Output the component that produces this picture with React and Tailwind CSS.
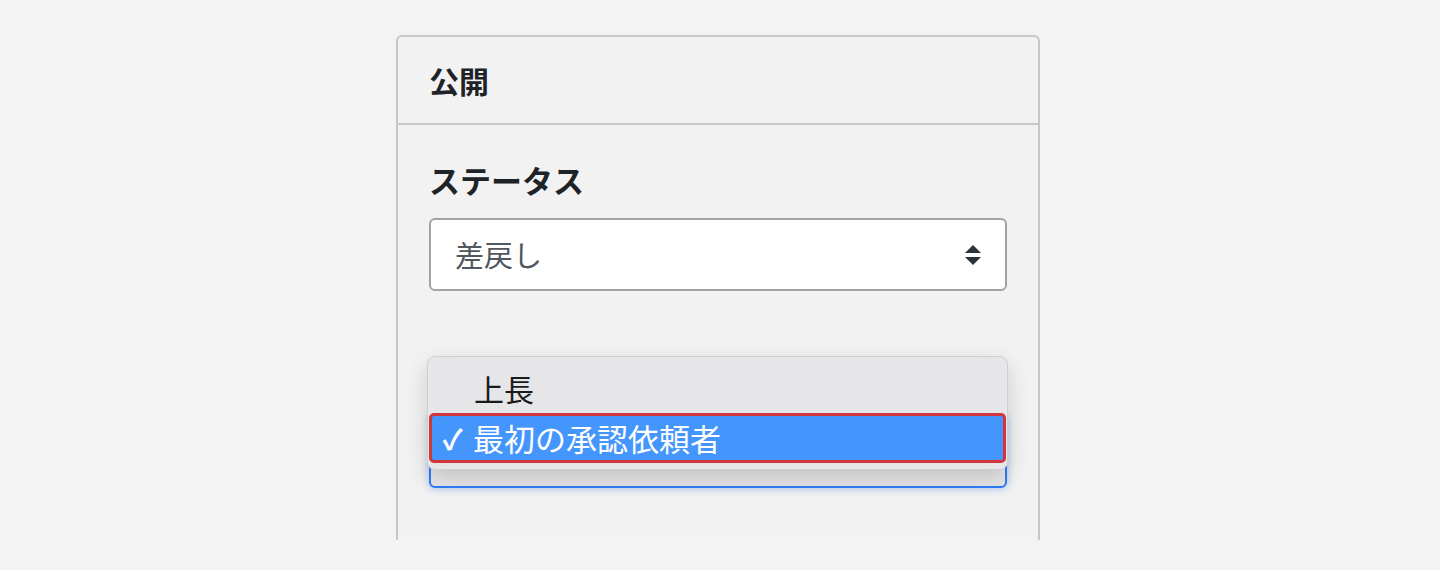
import React from 'react';

const font = { fontFamily: '"Noto Sans CJK JP", "Noto Sans", sans-serif' };

function UpDownArrows() {
  return (
    <svg width="20" height="22" viewBox="0 0 20 22" aria-hidden="true">
      <path d="M10 1 L18 9 L2 9 Z" fill="#2c3338" />
      <path d="M2 13 L18 13 L10 21 Z" fill="#2c3338" />
    </svg>
  );
}

export default function App() {
  return (
    <div className="w-[1440px] h-[570px] bg-[#f3f3f3] overflow-hidden" style={font}>
      <div className="ml-[396px] mt-[35px] w-[644px] h-[505px] bg-[#f2f2f2] border-2 border-b-0 border-[#c7c7c7] rounded-t-[6px]">
        {/* header */}
        <div className="h-[88px] border-b-2 border-[#c7c7c7] flex items-center pl-[31px]">
          <h2 className="text-[30px] font-bold text-[#1d2327] leading-none">公開</h2>
        </div>

        <div className="px-[31px] pt-[39px]">
          <div className="text-[31px] font-bold text-[#1d2327] leading-none">ステータス</div>

          {/* status select */}
          <div className="mt-[23px] h-[73px] w-[578px] bg-white border-2 border-[#a2a2a2] rounded-[6px] flex items-center justify-between pl-[24px] pr-[22px]">
            <span className="text-[29px] text-[#50575e]">差戻し</span>
            <UpDownArrows />
          </div>

          {/* focused select with open menu */}
          <div className="relative mt-[124px] h-[73px] w-[578px] bg-[#e7e7e7] border-2 border-[#2f7cf6] rounded-[6px] shadow-[0_0_6px_2px_rgba(47,124,246,0.25)]">
            <div className="absolute left-[-4px] right-[-3px] top-[-61px] h-[114px] bg-[#e6e5e7] rounded-[8px] border border-[#cfcfd1] shadow-[0_8px_22px_rgba(0,0,0,0.16)] py-[6px]">
              <div className="h-[50px] flex items-center pl-[46px] text-[30px] text-[#1a1a1a]">上長</div>
              <div className="h-[50px] mx-[1px] flex items-center bg-[#4596fc] border-[3px] border-[#d0363a] rounded-[5px] text-white text-[31px]">
                <span className="w-[41px] text-center text-[28px] font-bold">✓</span>
                <span>最初の承認依頼者</span>
              </div>
            </div>
          </div>
        </div>
      </div>
    </div>
  );
}
